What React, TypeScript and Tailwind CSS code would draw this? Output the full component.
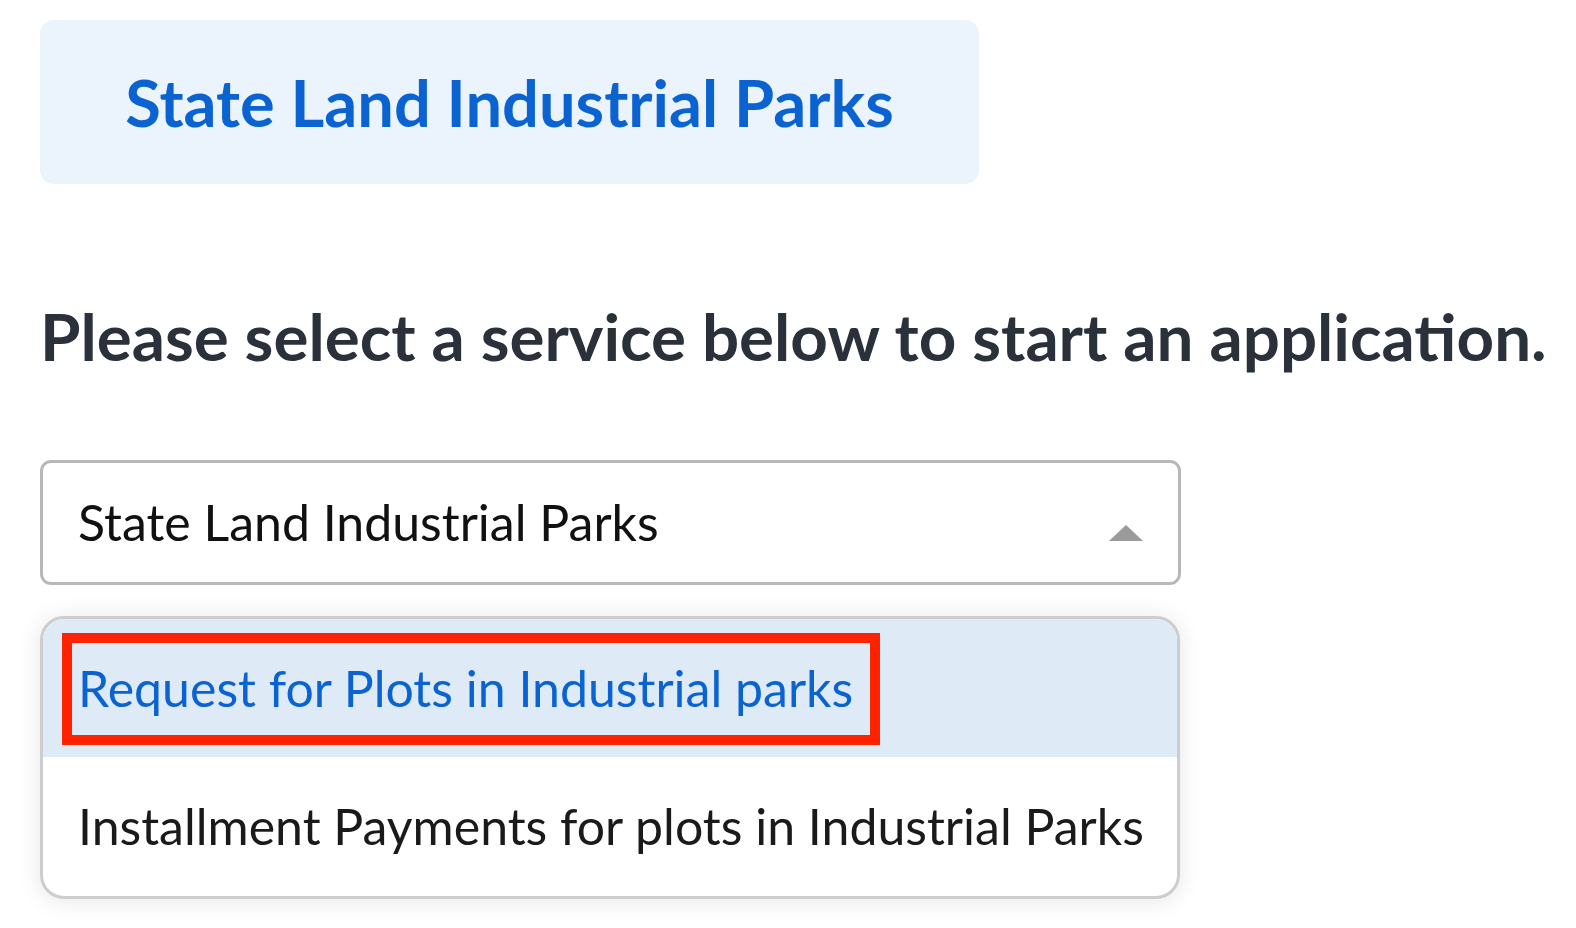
export default function App() {
  const font = { fontFamily: "Lato, 'Noto Sans', sans-serif" }
  return (
    <div className="min-h-screen bg-white pl-[40px] pt-[20px]" style={font}>
      <div className="w-[939px] h-[164px] rounded-[14px] bg-[#ebf3fd] flex items-center justify-center">
        <h1 className="text-[65px] font-bold text-[#0a63d1] leading-none">State Land Industrial Parks</h1>
      </div>

      <h2 className="mt-[119px] text-[65.5px] font-bold text-[#2a313b] leading-none whitespace-nowrap">
        Please select a service below to start an application.
      </h2>

      <div className="mt-[91px] w-[1141px]">
        <div className="h-[125px] rounded-[11px] border-[3px] border-[#b8b8b8] flex items-center justify-between pl-[35px] pr-[35px]">
          <span className="text-[50px] text-[#111111]">State Land Industrial Parks</span>
          <span className="w-0 h-0 border-l-[17px] border-r-[17px] border-b-[16px] border-l-transparent border-r-transparent border-b-[#9a9a9a] mt-[22px]"></span>
        </div>

        <div className="mt-[31px] w-[1140px] rounded-[24px] border-[3px] border-[#cdcdcd] bg-white shadow-[0_2px_24px_rgba(0,0,0,0.10)] overflow-hidden">
          <div className="h-[138px] bg-[#deebf7] pl-[19px] pt-[14px]">
            <div className="inline-flex border-[10px] border-[#ff2200] h-[112px] items-center pl-[6px] pr-[17px]">
              <span className="text-[50px] text-[#0a63d1]">Request for Plots in Industrial parks</span>
            </div>
          </div>
          <div className="h-[139px] flex items-center pl-[35px]">
            <span className="text-[50px] text-[#1a1a1a]">Installment Payments for plots in Industrial Parks</span>
          </div>
        </div>
      </div>
    </div>
  )
}
